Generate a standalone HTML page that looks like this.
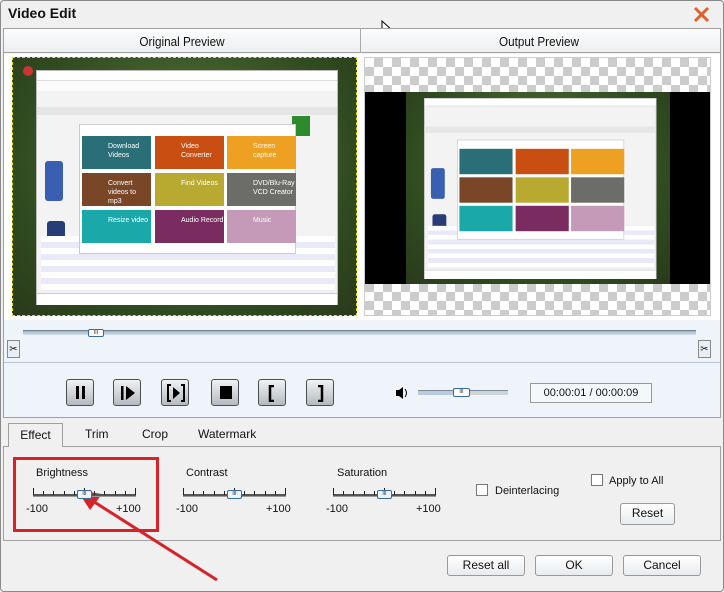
<!DOCTYPE html><html><head><meta charset="utf-8"><style>
*{box-sizing:border-box;margin:0;padding:0}
body{width:724px;height:592px;background:#f0f0f0;position:relative;overflow:hidden;font-family:"Liberation Sans",sans-serif;font-size:12px;color:#111}
.a{position:absolute}
.btn{position:absolute;width:28px;height:27px;border:1px solid #4a4f56;border-radius:3px;background:linear-gradient(#f0f2f4,#b4bac0);}
.dlg{position:absolute;border:1px solid #999;border-radius:3px;background:linear-gradient(#fff,#e8ecef);text-align:center;line-height:19px;font-size:12px}
.tile{position:absolute;width:69px;height:33px;color:#fff;font-size:7px;padding:6px 0 0 26px;line-height:9px}
.chk{position:absolute;width:12px;height:12px;border:1px solid #777;background:#fff}
</style></head><body>
<div class="a" style="left:0;top:0;width:724px;height:592px;border:1px solid #8a8a8a;border-radius:4px;background:#f0f0f0"></div>
<div class="a" style="left:8px;top:5px;font-weight:bold;font-size:14px">Video Edit</div>
<svg class="a" style="left:693px;top:6px" width="17" height="17"><path d="M2 2L15 15M15 2L2 15" stroke="#e0622a" stroke-width="3"/></svg>
<svg class="a" style="left:381px;top:20px" width="14" height="20"><path d="M1 1L1 16L5 12L8 18L10 17L7 11L12 11Z" fill="#fff" stroke="#000"/></svg>
<div class="a" style="left:3px;top:28px;width:718px;height:390px;border:1px solid #a0a0a0;background:#eef4fa"></div>
<div class="a" style="left:4px;top:29px;width:716px;height:24px;background:linear-gradient(#fdfdfd,#eceef0);border-bottom:1px solid #a0a0a0"></div>
<div class="a" style="left:360px;top:29px;width:1px;height:24px;background:#aaa"></div>
<div class="a" style="left:4px;top:34px;width:356px;text-align:center;font-size:13px;transform:scaleX(0.9)">Original Preview</div>
<div class="a" style="left:361px;top:34px;width:356px;text-align:center;font-size:13px;transform:scaleX(0.9)">Output Preview</div>
<div class="a" style="left:4px;top:54px;width:716px;height:266px;background:#fff"></div>
<div class="a" style="left:12px;top:57px;width:345px;height:259px;background:radial-gradient(ellipse at 50% 40%,#5a7a3a,#2f4a20 70%,#2a3a1c);border:1px dashed #e8e000;overflow:hidden">
 <div class="a" style="left:10px;top:8px;width:10px;height:10px;border-radius:50%;background:#c33"></div>
 <div class="a" style="left:23px;top:12px;width:302px;height:235px;background:#f3f3f3;border:1px solid #bbb">
  <div class="a" style="left:0;top:0;width:300px;height:10px;background:#fff;border-bottom:1px solid #ddd"></div>
  <div class="a" style="left:0;top:10px;width:300px;height:10px;background:#fafafa"></div>
  <div class="a" style="left:0;top:36px;width:300px;height:8px;background:#e6e6e6"></div>
  <div class="a" style="left:8px;top:90px;width:18px;height:40px;background:#3a5fb0;border-radius:3px"></div>
  <div class="a" style="left:10px;top:150px;width:18px;height:35px;background:#283c78;border-radius:3px"></div>
  <div class="a" style="left:255px;top:45px;width:18px;height:20px;background:#2d8a2d"></div>
  <div class="a" style="left:4px;top:165px;width:294px;height:55px;background:repeating-linear-gradient(#fff 0 6px,#e9e9f8 6px 12px)"></div>
  <div class="a" style="left:0;top:222px;width:300px;height:12px;background:#fff;border-top:1px solid #ccc"></div>
  <div class="a" style="left:42px;top:53px;width:217px;height:130px;background:#fff;border:1px solid #ccc">
   <div class="tile" style="left:2px;top:11px;background:#2a6f78">Download Videos</div>
   <div class="tile" style="left:75px;top:11px;background:#c84e12">Video Converter</div>
   <div class="tile" style="left:147px;top:11px;background:#eea022">Screen capture</div>
   <div class="tile" style="left:2px;top:48px;background:#7a4628">Convert videos to mp3</div>
   <div class="tile" style="left:75px;top:48px;background:#b8aa30">Find Videos</div>
   <div class="tile" style="left:147px;top:48px;background:#6c6c68">DVD/Blu-Ray VCD Creator</div>
   <div class="tile" style="left:2px;top:85px;background:#1aa8a8">Resize video</div>
   <div class="tile" style="left:75px;top:85px;background:#7a2c60">Audio Record</div>
   <div class="tile" style="left:147px;top:85px;background:#c49ab8">Music</div>
  </div>
 </div>
</div>
<div class="a" style="left:364px;top:57px;width:347px;height:259px;border:1px solid #ccc;background-color:#fff;background-image:linear-gradient(45deg,#ccc 25%,transparent 25%,transparent 75%,#ccc 75%),linear-gradient(45deg,#ccc 25%,transparent 25%,transparent 75%,#ccc 75%);background-size:18px 18px;background-position:0 0,9px 9px;overflow:hidden">
 <div class="a" style="left:0;top:34px;width:347px;height:192px;background:#000"></div>
 <div class="a" style="left:41px;top:34px;width:264px;height:192px;background:radial-gradient(ellipse at 50% 40%,#5a7a3a,#2f4a20 70%,#2a3a1c)"></div>
 <div class="a" style="left:59px;top:40px;width:302px;height:235px;transform:scale(0.77);transform-origin:0 0;background:#f3f3f3;border:1px solid #bbb">
  <div class="a" style="left:0;top:0;width:300px;height:10px;background:#fff;border-bottom:1px solid #ddd"></div>
  <div class="a" style="left:0;top:36px;width:300px;height:8px;background:#e6e6e6"></div>
  <div class="a" style="left:8px;top:90px;width:18px;height:40px;background:#3a5fb0;border-radius:3px"></div>
  <div class="a" style="left:10px;top:150px;width:18px;height:35px;background:#283c78;border-radius:3px"></div>
  <div class="a" style="left:4px;top:165px;width:294px;height:55px;background:repeating-linear-gradient(#fff 0 6px,#e9e9f8 6px 12px)"></div>
  <div class="a" style="left:0;top:222px;width:300px;height:12px;background:#fff;border-top:1px solid #ccc"></div>
  <div class="a" style="left:42px;top:53px;width:217px;height:130px;background:#fff;border:1px solid #ccc">
   <div class="tile" style="left:2px;top:11px;background:#2a6f78"></div>
   <div class="tile" style="left:75px;top:11px;background:#c84e12"></div>
   <div class="tile" style="left:147px;top:11px;background:#eea022"></div>
   <div class="tile" style="left:2px;top:48px;background:#7a4628"></div>
   <div class="tile" style="left:75px;top:48px;background:#b8aa30"></div>
   <div class="tile" style="left:147px;top:48px;background:#6c6c68"></div>
   <div class="tile" style="left:2px;top:85px;background:#1aa8a8"></div>
   <div class="tile" style="left:75px;top:85px;background:#7a2c60"></div>
   <div class="tile" style="left:147px;top:85px;background:#c49ab8"></div>
  </div>
 </div>
</div>
<div class="a" style="left:23px;top:330px;width:673px;height:5px;background:linear-gradient(#9fb2c4,#d4e0ea);border-top:1px solid #6f8194"></div>
<div class="a" style="left:88px;top:329px;width:16px;height:8px;border:1px solid #3a6a9a;background:#fff;border-radius:2px;font-size:5px;line-height:6px;text-align:center">III</div>
<div class="a" style="left:7px;top:340px;width:13px;height:18px;border:1px solid #888;background:#e8eef4;font-size:10px;text-align:center;line-height:18px">✂</div>
<div class="a" style="left:698px;top:340px;width:13px;height:18px;border:1px solid #888;background:#e8eef4;font-size:10px;text-align:center;line-height:18px">✂</div>
<div class="a" style="left:4px;top:362px;width:716px;height:1px;background:#b8c4d0"></div>
<div class="btn" style="left:66px;top:379px"><div class="a" style="left:9px;top:6px;width:3px;height:13px;background:#000"></div><div class="a" style="left:15px;top:6px;width:3px;height:13px;background:#000"></div></div>
<div class="btn" style="left:113px;top:379px"><svg class="a" style="left:6px;top:5px" width="16" height="16"><rect x="1" y="1" width="2.5" height="14"/><path d="M6 1L15 8L6 15Z"/></svg></div>
<div class="btn" style="left:161px;top:379px"><svg class="a" style="left:4px;top:4px" width="20" height="18"><path d="M5 1H2V17H5M15 1H18V17H15" fill="none" stroke="#000" stroke-width="2"/><path d="M7 3L14 9L7 15Z"/></svg></div>
<div class="btn" style="left:211px;top:379px"><div class="a" style="left:8px;top:6px;width:12px;height:13px;background:#000"></div></div>
<div class="btn" style="left:258px;top:379px"><svg class="a" style="left:8px;top:5px" width="10" height="17"><path d="M7 1H3V16H7" fill="none" stroke="#000" stroke-width="2.5"/></svg></div>
<div class="btn" style="left:306px;top:379px"><svg class="a" style="left:9px;top:5px" width="10" height="17"><path d="M2 1H6V16H2" fill="none" stroke="#000" stroke-width="2.5"/></svg></div>
<svg class="a" style="left:395px;top:386px" width="16" height="14"><path d="M1 4H4L8 1V13L4 10H1Z"/><path d="M10 3Q13 7 10 11" fill="none" stroke="#000"/></svg>
<div class="a" style="left:418px;top:390px;width:90px;height:5px;background:linear-gradient(90deg,#b8cadb 50%,#cfd4d8 50%);border-top:1px solid #7a8a9a"></div>
<div class="a" style="left:453px;top:388px;width:17px;height:9px;border:1px solid #3a6a9a;background:#fff;border-radius:2px;font-size:5px;line-height:7px;text-align:center">III</div>
<div class="a" style="left:530px;top:383px;width:122px;height:20px;border:1px solid #999;background:#f4f8fb;text-align:center;line-height:18px;font-size:11px">00:00:01 / 00:00:09</div>
<div class="a" style="left:3px;top:446px;width:718px;height:95px;border:1px solid #a0a0a0;background:#f0f0f0"></div>
<div class="a" style="left:8px;top:423px;width:55px;height:24px;border:1px solid #a0a0a0;border-bottom:none;background:#f0f0f0;text-align:center;line-height:22px;font-size:12px">Effect</div>
<div class="a" style="left:85px;top:427px">Trim</div>
<div class="a" style="left:142px;top:427px">Crop</div>
<div class="a" style="left:198px;top:427px">Watermark</div>
<div class="a" style="left:36px;top:467px;font-size:11px">Brightness</div>
<div class="a" style="left:186px;top:467px;font-size:11px">Contrast</div>
<div class="a" style="left:337px;top:467px;font-size:11px">Saturation</div>
<div class="a" style="left:26px;top:503px;font-size:11px">-100</div><div class="a" style="left:116px;top:503px;font-size:11px">+100</div>
<div class="a" style="left:176px;top:503px;font-size:11px">-100</div><div class="a" style="left:266px;top:503px;font-size:11px">+100</div>
<div class="a" style="left:326px;top:503px;font-size:11px">-100</div><div class="a" style="left:416px;top:503px;font-size:11px">+100</div>
<div class="chk" style="left:476px;top:484px"></div><div class="a" style="left:495px;top:485px;font-size:11px">Deinterlacing</div>
<div class="chk" style="left:591px;top:474px"></div><div class="a" style="left:609px;top:475px;font-size:11px">Apply to All</div>
<div class="dlg" style="left:620px;top:503px;width:55px;height:22px">Reset</div>
<div class="a" style="left:13px;top:457px;width:146px;height:75px;border:3px solid #d8222a"></div>
<svg class="a" style="left:60px;top:478px" width="170" height="110"><path d="M157 102L28 20" stroke="#d8222a" stroke-width="3"/><path d="M17 12L42 16L30 32Z" fill="#d8222a"/></svg>
<div class="dlg" style="left:447px;top:555px;width:78px;height:21px">Reset all</div>
<div class="dlg" style="left:535px;top:555px;width:78px;height:21px">OK</div>
<div class="dlg" style="left:623px;top:555px;width:78px;height:21px">Cancel</div>
<script>
[[33,488],[183,488],[333,488]].forEach(function(p){
 var h='<div class="a" style="left:'+p[0]+'px;top:'+(p[1]+6)+'px;width:103px;height:3px;background:#555;border-bottom:1px solid #999"></div>';
 for(var i=0;i<=10;i++){var x=p[0]+i*10.2;h+='<div class="a" style="left:'+x+'px;top:'+(p[1]+(i==0||i==10||i==5?0:3))+'px;width:1px;height:'+(i==0||i==10||i==5?7:4)+'px;background:#222"></div>';}
 h+='<div class="a" style="left:'+(p[0]+44)+'px;top:'+(p[1]+2)+'px;width:15px;height:9px;border:1px solid #3a6a9a;background:#eef4ff;border-radius:2px;font-size:5px;line-height:7px;text-align:center">III</div>';
 document.body.insertAdjacentHTML('beforeend',h);
});
</script>
</body></html>
